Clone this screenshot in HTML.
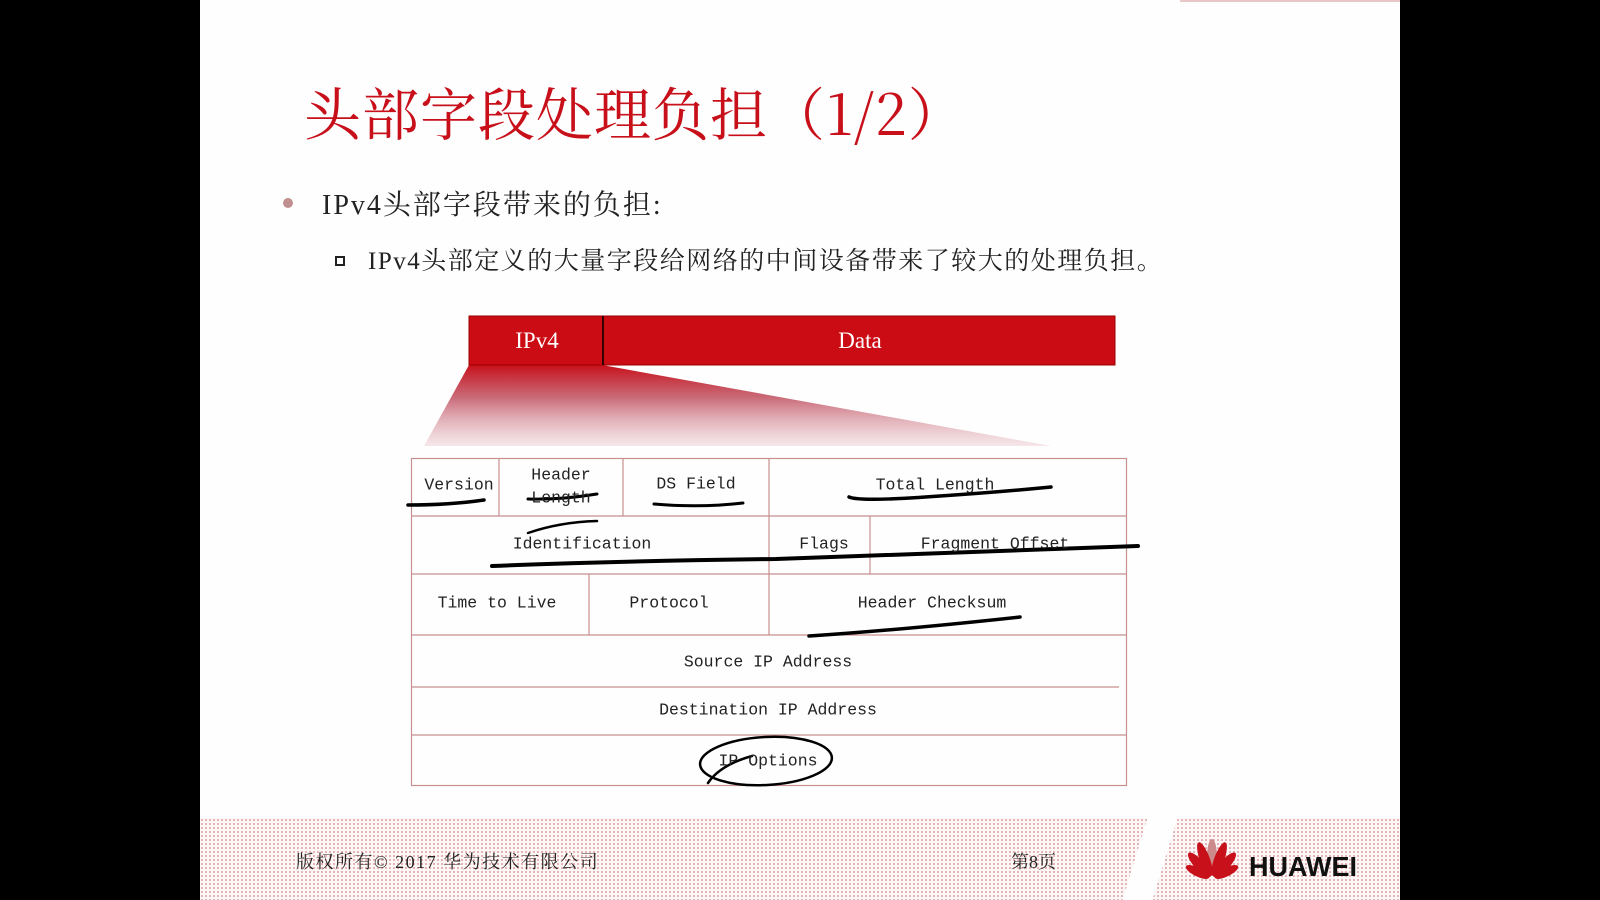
<!DOCTYPE html>
<html><head><meta charset="utf-8"><style>
body{margin:0;width:1600px;height:900px;background:#000;position:relative;overflow:hidden;font-family:"Liberation Serif","Noto Serif CJK SC",serif}
#s{position:absolute;left:200px;top:0;width:1200px;height:900px;background:#fefefe}
.a{position:absolute;white-space:nowrap}
.t{position:absolute;font-family:"Liberation Mono",monospace;font-size:16.5px;color:#222;transform:translate(-50%,-50%);white-space:nowrap}
.foot{position:absolute;left:200px;top:818px;width:1200px;height:82px;background-image:radial-gradient(#d9a0a0 0.8px,transparent 1px);background-size:4px 4px;background-color:#fdf6f6}
</style></head><body>
<div id="s"></div>
<div class="foot"></div>
<div class="a" style="left:1135px;top:818px;width:30px;height:82px;background:#fefefe;transform:skewX(-17deg)"></div>
<div class="a" style="left:1180px;top:0;width:220px;height:2px;background:#e8c8c8"></div>
<div class="a" style="left:304px;top:70px;font-size:57px;color:#c8101a;font-family:'Noto Serif CJK SC',serif;letter-spacing:1px">头部字段处理负担（1/2）</div>
<div class="a" style="left:283px;top:198px;width:10px;height:10px;border-radius:50%;background:#c09090"></div>
<div class="a" style="left:322px;top:183px;font-size:28px;color:#222;letter-spacing:2px">IPv4头部字段带来的负担:</div>
<div class="a" style="left:335px;top:256px;width:6px;height:6px;border:2px solid #222"></div>
<div class="a" style="left:368px;top:241px;font-size:25px;color:#222;letter-spacing:1.5px">IPv4头部定义的大量字段给网络的中间设备带来了较大的处理负担。</div>
<svg class="a" style="left:0;top:0" width="1600" height="900">
<defs><linearGradient id="g" x1="0" y1="0" x2="0" y2="1"><stop offset="0" stop-color="#c8101a"/><stop offset="0.4" stop-color="#c05060" stop-opacity="0.85"/><stop offset="1" stop-color="#e0b0b8" stop-opacity="0.3"/></linearGradient></defs>
<polygon points="469,365 602,365 1051,446 424,446" fill="url(#g)"/>
<rect x="469" y="316" width="646" height="49" fill="#cc0c14" stroke="#900" stroke-width="1"/>
<line x1="603" y1="316" x2="603" y2="365" stroke="#300" stroke-width="2"/>
<text x="537" y="348" fill="#fff" font-size="23" text-anchor="middle" font-family="Liberation Serif">IPv4</text>
<text x="860" y="348" fill="#fff" font-size="23" text-anchor="middle" font-family="Liberation Serif">Data</text>
<g stroke="#c89090" stroke-width="1.2" fill="none">
<rect x="411.5" y="458.5" width="715" height="327"/>
<line x1="411" y1="516" x2="1126" y2="516"/><line x1="411" y1="574" x2="1126" y2="574"/>
<line x1="411" y1="635" x2="1126" y2="635"/><line x1="411" y1="687" x2="1119" y2="687"/>
<line x1="411" y1="735" x2="1126" y2="735"/>
<line x1="499" y1="458" x2="499" y2="516"/><line x1="623" y1="458" x2="623" y2="516"/>
<line x1="769" y1="458" x2="769" y2="635"/><line x1="870" y1="516" x2="870" y2="574"/>
<line x1="589" y1="574" x2="589" y2="635"/>
</g>
<g stroke="#000" fill="none" stroke-linecap="round">
<path d="M408 505 Q450 505 484 500" stroke-width="3.5"/>
<path d="M528 499 Q560 500 597 494" stroke-width="3"/>
<path d="M528 533 Q560 522 597 521" stroke-width="2.5"/>
<path d="M654 504 Q700 508 743 503" stroke-width="3"/>
<path d="M849 497 Q860 502 940 496 Q1000 492 1051 487" stroke-width="3.5"/>
<path d="M492 566 Q620 561 776 559 Q960 553 1138 546" stroke-width="4"/>
<path d="M809 636 Q900 630 1020 617" stroke-width="3.5"/>
<ellipse cx="766" cy="761" rx="66" ry="24" stroke-width="2.5" transform="rotate(-3 766 761)"/>
<path d="M708 783 Q720 765 752 756" stroke-width="2.5"/>
</g>
<g fill="#c8101a" transform="translate(1212 879)">
<ellipse cx="0" cy="-22" rx="5" ry="18" fill="#cc8a8a"/>
<ellipse cx="0" cy="-21" rx="5" ry="18" transform="rotate(-20)"/>
<ellipse cx="0" cy="-21" rx="5" ry="18" transform="rotate(20)"/>
<ellipse cx="0" cy="-19" rx="5" ry="16" transform="rotate(-42)"/>
<ellipse cx="0" cy="-19" rx="5" ry="16" transform="rotate(42)"/>
<ellipse cx="0" cy="-16" rx="4.5" ry="13" transform="rotate(-64)"/>
<ellipse cx="0" cy="-16" rx="4.5" ry="13" transform="rotate(64)"/>
</g>
<text x="1249" y="876" font-family="Liberation Sans" font-weight="bold" font-size="28" fill="#111" textLength="108" lengthAdjust="spacingAndGlyphs">HUAWEI</text>
</svg>
<div class="t" style="left:459px;top:485px">Version</div>
<div class="t" style="left:561px;top:475px">Header</div>
<div class="t" style="left:561px;top:498px">Length</div>
<div class="t" style="left:696px;top:484px">DS Field</div>
<div class="t" style="left:935px;top:485px">Total Length</div>
<div class="t" style="left:582px;top:544px">Identification</div>
<div class="t" style="left:824px;top:544px">Flags</div>
<div class="t" style="left:995px;top:544px">Fragment Offset</div>
<div class="t" style="left:497px;top:603px">Time to Live</div>
<div class="t" style="left:669px;top:603px">Protocol</div>
<div class="t" style="left:932px;top:603px">Header Checksum</div>
<div class="t" style="left:768px;top:662px">Source IP Address</div>
<div class="t" style="left:768px;top:710px">Destination IP Address</div>
<div class="t" style="left:768px;top:761px">IP Options</div>
<div class="a" style="left:296px;top:848px;font-size:18px;color:#222;letter-spacing:1.5px">版权所有© 2017 华为技术有限公司</div>
<div class="a" style="left:1011px;top:848px;font-size:18px;color:#222">第8页</div>
</body></html>
